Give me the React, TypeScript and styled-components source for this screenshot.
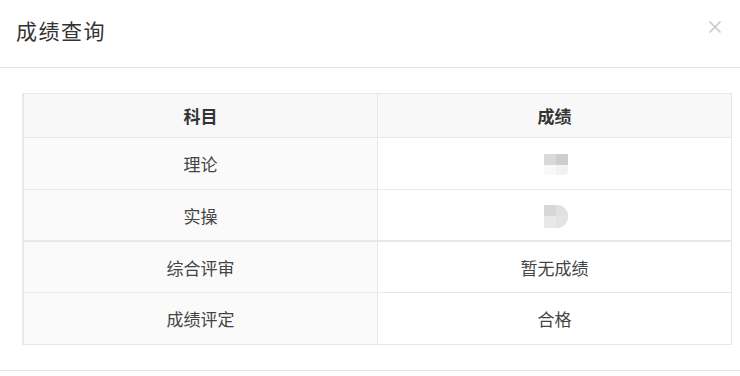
import React from "react";
import styled, { createGlobalStyle } from "styled-components";

const Global = createGlobalStyle`
  html, body { margin: 0; padding: 0; background: #ffffff; }
  body { font-family: "Microsoft YaHei", "Noto Sans CJK SC", "Noto Sans", sans-serif; }
  * { box-sizing: border-box; }
`;

const Dialog = styled.div`
  width: 740px;
  height: 376px;
  background: #fff;
  display: flex;
  flex-direction: column;
`;

const Header = styled.div`
  height: 68px;
  border-bottom: 1px solid #e5e5e5;
  display: flex;
  align-items: center;
  justify-content: space-between;
  padding: 0 17px 8px 16px;
  position: relative;
`;

const Title = styled.h2`
  margin: 0;
  font-size: 21px;
  font-weight: 400;
  color: #333;
  letter-spacing: 1.5px;
`;

const Close = styled.button`
  position: absolute;
  top: 20px;
  right: 18px;
  width: 14px;
  height: 14px;
  padding: 0;
  border: 0;
  background: transparent;
  cursor: pointer;
  display: flex;
`;

const Body = styled.div`
  padding: 25px 8px 25px 22px;
  border-bottom: 1px solid #e5e5e5;
`;

const Table = styled.div`
  border: 1px solid #e8e8e8;
  border-left-width: 2px;
  display: flex;
  flex-direction: column;
`;

const Row = styled.div<{ $head?: boolean; $thick?: boolean; $h: number }>`
  display: grid;
  grid-template-columns: 354px 1fr;
  height: ${(p) => p.$h}px;
  border-top: ${(p) => (p.$head ? 0 : p.$thick ? 2 : 1)}px solid #e8e8e8;
  background: ${(p) => (p.$head ? "#f8f8f8" : "#fff")};
`;

const Cell = styled.div<{ $head?: boolean; $first?: boolean }>`
  display: flex;
  align-items: center;
  justify-content: center;
  font-size: 17px;
  font-weight: ${(p) => (p.$head ? 700 : 400)};
  color: ${(p) => (p.$head ? "#333" : "#444")};
  background: ${(p) => (p.$first && !p.$head ? "#fafafa" : "transparent")};
  border-right: ${(p) => (p.$first ? "1px solid #e8e8e8" : "0")};
`;

const Pix = styled.div`
  display: grid;
  grid-template-columns: 12px 12px;
  overflow: hidden;
  margin: 2px 0 0 3px;
`;

const Px = styled.div<{ $c: string }>`
  background: ${(p) => p.$c};
`;

const Blur1 = styled(Pix)`
  border-radius: 0 0 4px 4px;
  grid-template-rows: 11px 10px;
`;

const Blur2 = styled(Pix)`
  border-radius: 0 11px 11px 0;
  grid-template-rows: 11px 12px;
`;

export default function App() {
  return (
    <>
      <Global />
      <Dialog>
        <Header>
          <Title>成绩查询</Title>
          <Close aria-label="关闭">
            <svg width="14" height="14" viewBox="0 0 14 14">
              <path d="M1.5 1.5 L12.5 12.5 M12.5 1.5 L1.5 12.5" stroke="#c8c8c8" strokeWidth="1.6" />
            </svg>
          </Close>
        </Header>
        <Body>
          <Table>
            <Row $head $h={43}>
              <Cell $head $first>科目</Cell>
              <Cell $head>成绩</Cell>
            </Row>
            <Row $h={52}>
              <Cell $first>理论</Cell>
              <Cell>
                <Blur1>
                  <Px $c="#d9d9d9" />
                  <Px $c="#cdcdcd" />
                  <Px $c="#f8f8f8" />
                  <Px $c="#f2f2f2" />
                </Blur1>
              </Cell>
            </Row>
            <Row $h={51}>
              <Cell $first>实操</Cell>
              <Cell>
                <Blur2>
                  <Px $c="#d7d7d7" />
                  <Px $c="#e0e0e0" />
                  <Px $c="#e8e8e8" />
                  <Px $c="#e3e3e3" />
                </Blur2>
              </Cell>
            </Row>
            <Row $thick $h={52}>
              <Cell $first>综合评审</Cell>
              <Cell>暂无成绩</Cell>
            </Row>
            <Row $h={52}>
              <Cell $first>成绩评定</Cell>
              <Cell>合格</Cell>
            </Row>
          </Table>
        </Body>
      </Dialog>
    </>
  );
}
